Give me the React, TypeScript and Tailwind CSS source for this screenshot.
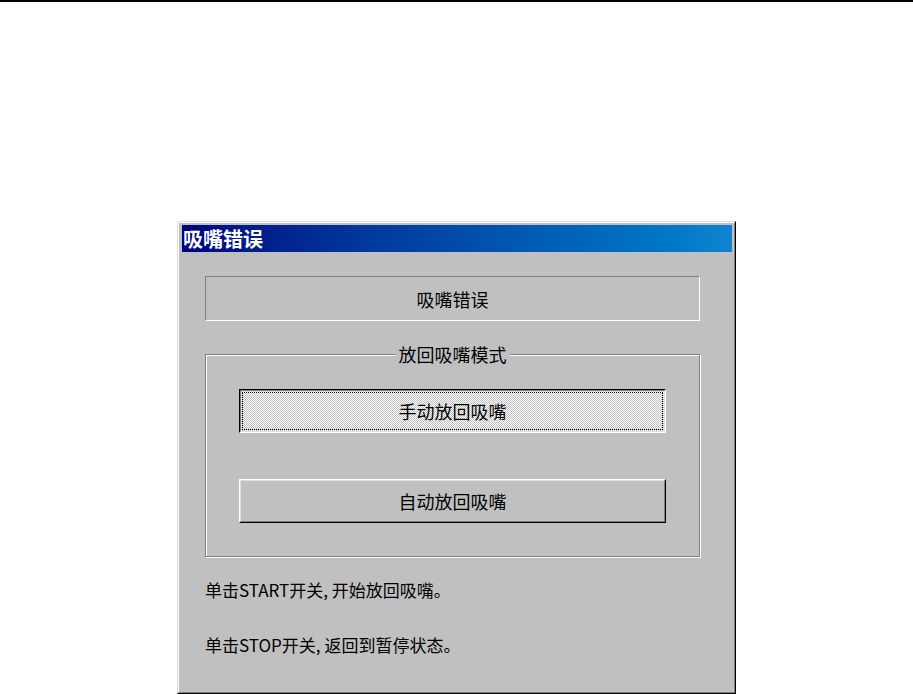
import React from "react";

const hintLines = ["单击START开关, 开始放回吸嘴。", "单击STOP开关, 返回到暂停状态。"];

const App: React.FC = () => {
  return (
    <div className="w-[913px] h-[694px] bg-white overflow-hidden font-['Noto_Sans_CJK_SC',sans-serif] text-black">
      <div className="h-[2px] w-full bg-black" />

      {/* Dialog window */}
      <div className="ml-[177px] mt-[219px] w-[559px] h-[473px] bg-[#c0c0c0] border border-t-[#dfdfdf] border-l-[#dfdfdf] border-r-black border-b-black">
        <div className="h-full border border-t-white border-l-white border-r-[#808080] border-b-[#808080] pt-[2px] pl-[3px] pr-[2px] flex flex-col">
          {/* Title bar */}
          <div className="h-[27px] flex items-center pl-[1px] bg-gradient-to-r from-[#000080] to-[#1084d0]">
            <span className="text-white font-bold text-[20px] leading-none">吸嘴错误</span>
          </div>

          {/* Error message box */}
          <div className="mt-[24px] ml-[23px] w-[495px] h-[45px] flex items-center justify-center border border-t-[#808080] border-l-[#808080] border-r-white border-b-white">
            <span className="text-[18px] leading-[20px]">吸嘴错误</span>
          </div>

          {/* Group box */}
          <div className="relative mt-[33px] ml-[23px] w-[495px] h-[203px] border border-[#808080] shadow-[inset_1px_1px_0_#fff,1px_1px_0_#fff] flex flex-col">
            <span className="absolute left-1/2 -translate-x-1/2 -top-[11px] px-[3px] bg-[#c0c0c0] text-[18px] leading-[20px] whitespace-nowrap">
              放回吸嘴模式
            </span>

            {/* Pressed button */}
            <div className="mt-[34px] mx-auto w-[427px] h-[44px] border border-t-black border-l-black border-r-white border-b-white">
              <div className="h-full border border-t-[#808080] border-l-[#808080] border-r-[#dfdfdf] border-b-[#dfdfdf] p-[1px] bg-[repeating-conic-gradient(#ffffff_0_25%,#c0c0c0_0_50%)] bg-size-[2px_2px]">
                <div className="h-full border border-dotted border-black flex items-center justify-center">
                  <span className="text-[18px] leading-[20px]">手动放回吸嘴</span>
                </div>
              </div>
            </div>

            {/* Raised button */}
            <div className="mt-[46px] mx-auto w-[427px] h-[44px] border border-t-white border-l-white border-r-black border-b-black">
              <div className="h-full border border-t-[#dfdfdf] border-l-[#dfdfdf] border-r-[#808080] border-b-[#808080] flex items-center justify-center">
                <span className="text-[18px] leading-[20px]">自动放回吸嘴</span>
              </div>
            </div>
          </div>

          {/* Hints */}
          <div className="mt-[23px] ml-[23px] grid gap-[35px]">
            {hintLines.map((line) => (
              <p key={line} className="text-[17px] leading-[20px] whitespace-nowrap">
                {line}
              </p>
            ))}
          </div>
        </div>
      </div>
    </div>
  );
};

export default App;
